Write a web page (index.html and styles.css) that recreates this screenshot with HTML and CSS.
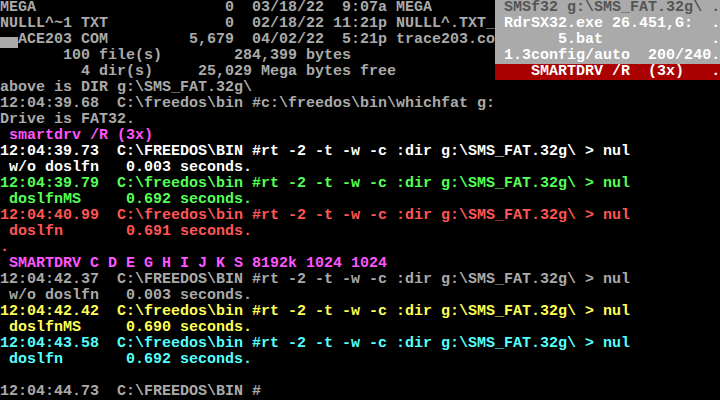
FILE: index.html
```html
<!DOCTYPE html>
<html>
<head>
<meta charset="utf-8">
<link rel="stylesheet" href="styles.css">
</head>
<body>
<div class="screen">
<div class="ln gray"><span>MEGA                     0  03/18/22  9:07a MEGA       </span><span class="pop pop-dim"> SMSf32 g:\SMS_FAT.32g\ .</span></div>
<div class="ln gray"><span>NULLL^~1 TXT             0  02/18/22 11:21p NULLL^.TXT_</span><span class="pop"> RdrSX32.exe 26.451,G:  .</span></div>
<div class="ln gray"><span class="blk">  </span><span>ACE203 COM         5,679  04/02/22  5:21p trace203.co</span><span class="pop">       5.bat            .</span></div>
<div class="ln gray"><span>       100 file(s)        284,399 bytes                </span><span class="pop"> 1.3config/auto  200/240.</span></div>
<div class="ln gray"><span>         4 dir(s)     25,029 Mega bytes free           </span><span class="pop pop-red">    SMARTDRV /R  (3x)   .</span></div>
<div class="ln gray">above is DIR g:\SMS_FAT.32g\</div>
<div class="ln gray">12:04:39.68  C:\freedos\bin #c:\freedos\bin\whichfat g:</div>
<div class="ln gray">Drive is FAT32.</div>
<div class="ln magenta"> smartdrv /R (3x)</div>
<div class="ln white">12:04:39.73  C:\FREEDOS\BIN #rt -2 -t -w -c :dir g:\SMS_FAT.32g\ &gt; nul</div>
<div class="ln white"> w/o doslfn   0.003 seconds.</div>
<div class="ln green">12:04:39.79  C:\freedos\bin #rt -2 -t -w -c :dir g:\SMS_FAT.32g\ &gt; nul</div>
<div class="ln green"> doslfnMS     0.692 seconds.</div>
<div class="ln red">12:04:40.99  C:\freedos\bin #rt -2 -t -w -c :dir g:\SMS_FAT.32g\ &gt; nul</div>
<div class="ln red"> doslfn       0.691 seconds.</div>
<div class="ln red">.</div>
<div class="ln magenta"> SMARTDRV C D E G H I J K S 8192k 1024 1024</div>
<div class="ln gray">12:04:42.37  C:\FREEDOS\BIN #rt -2 -t -w -c :dir g:\SMS_FAT.32g\ &gt; nul</div>
<div class="ln gray"> w/o doslfn   0.003 seconds.</div>
<div class="ln yellow">12:04:42.42  C:\freedos\bin #rt -2 -t -w -c :dir g:\SMS_FAT.32g\ &gt; nul</div>
<div class="ln yellow"> doslfnMS     0.690 seconds.</div>
<div class="ln cyan">12:04:43.58  C:\freedos\bin #rt -2 -t -w -c :dir g:\SMS_FAT.32g\ &gt; nul</div>
<div class="ln cyan"> doslfn       0.692 seconds.</div>
<div class="ln gray"> </div>
<div class="ln gray">12:04:44.73  C:\FREEDOS\BIN #</div>
</div>
</body>
</html>
```
FILE: styles.css
```css
html, body {
  margin: 0;
  padding: 0;
  background: #000;
}
.screen {
  width: 720px;
  height: 400px;
  overflow: hidden;
  display: flex;
  flex-direction: column;
  font-family: "Liberation Mono", "DejaVu Sans Mono", monospace;
  font-size: 15px;
  font-weight: bold;
  line-height: 16px;
}
.ln {
  height: 16px;
  white-space: pre;
}
.gray { color: #aaaaaa; }
.white { color: #ffffff; }
.green { color: #55ff55; }
.red { color: #ff5555; }
.magenta { color: #ff55ff; }
.yellow { color: #ffff55; }
.cyan { color: #55ffff; }
.pop {
  display: inline-block;
  height: 16px;
  background: #aaaaaa;
  color: #ffffff;
}
.pop-dim { color: #555555; }
.pop-red { background: #aa0000; color: #ffffff; }
.blk {
  display: inline-block;
  height: 16px;
  background: linear-gradient(to bottom, transparent 5px, #aaaaaa 5px);
}
```
